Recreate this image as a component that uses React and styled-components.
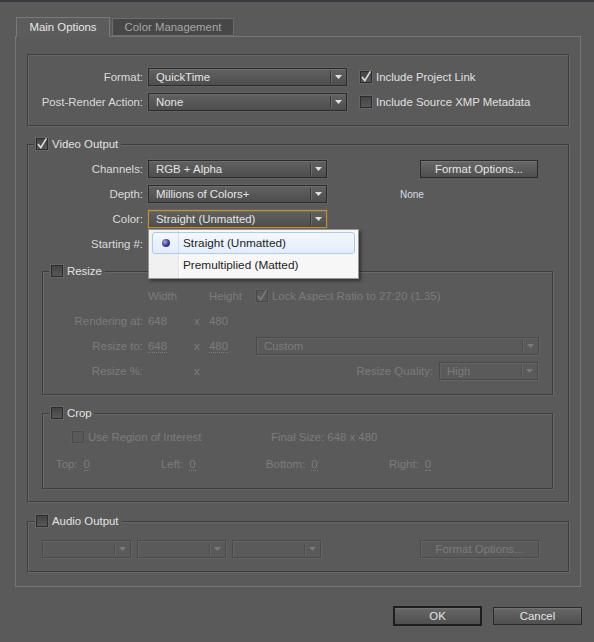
import React from 'react';
import styled, { createGlobalStyle } from 'styled-components';

const GlobalStyle = createGlobalStyle`
  html, body {
    margin: 0;
    padding: 0;
    background: #5a5a5a;
  }
  * {
    box-sizing: border-box;
  }
`;

const Window = styled.div`
  width: 594px;
  height: 642px;
  overflow: hidden;
  background: #5a5a5a;
  border-top: 2px solid #363a40;
  font-family: "Liberation Sans", Arial, sans-serif;
  font-size: 11.4px;
  color: #dadada;
`;

const TabBar = styled.div`
  display: flex;
  align-items: flex-end;
  height: 34px;
  padding-left: 16px;
`;

const Tab = styled.div`
  position: relative;
  z-index: ${p => (p.$active ? 1 : 0)};
  width: ${p => p.$w}px;
  height: ${p => (p.$active ? 20 : 18)}px;
  margin-bottom: ${p => (p.$active ? -1 : 0)}px;
  margin-left: ${p => (p.$active ? 0 : 2)}px;
  display: flex;
  align-items: center;
  justify-content: center;
  padding-bottom: ${p => (p.$active ? 2 : 0)}px;
  border: 1px solid ${p => (p.$active ? '#7a7a7a' : '#6c6c6c')};
  border-bottom: ${p => (p.$active ? 'none' : '1px solid #6c6c6c')};
  background: ${p => (p.$active ? '#5c5c5c' : '#474747')};
  color: ${p => (p.$active ? '#e8e8e8' : '#a6a6a6')};
`;

const Panel = styled.div`
  margin-left: 15px;
  width: 566px;
  border: 1px solid #767676;
  padding: 17px 11px 14px;
`;

const GroupBox = styled.div`
  border: 1px solid #3e3e3e;
  box-shadow: inset 1px 1px 0 #686868, 1px 1px 0 #686868;
`;

const TopGroup = styled(GroupBox)`
  padding: 13px 0 14px;
`;

const VideoGroup = styled(GroupBox)`
  margin-top: 18px;
  padding-bottom: 12px;
`;

const SubGroup = styled(GroupBox)`
  margin: 18px 15px 0 14px;
  padding-bottom: ${p => p.$pb}px;
`;

const AudioGroup = styled(GroupBox)`
  margin-top: 19px;
  padding-bottom: 13px;
`;

const Legend = styled.div`
  width: fit-content;
  height: 14px;
  margin: -8px 0 0 6px;
  padding: 0 3px 0 2px;
  display: flex;
  align-items: center;
  gap: 4px;
  background: #5a5a5a;
  color: #e2e2e2;
`;

const FormGrid = styled.div`
  display: grid;
  grid-template-columns: ${p => p.$cols};
  grid-auto-rows: 18px;
  row-gap: 7px;
  align-items: center;
  margin-top: ${p => p.$mt || 0}px;
  color: ${p => (p.$disabled ? '#7c7c7c' : '#dadada')};
`;

const FieldLabel = styled.span`
  text-align: right;
  padding-right: 5px;
  white-space: nowrap;
`;

const CheckRow = styled.label`
  display: flex;
  align-items: center;
  gap: 4px;
  white-space: nowrap;
  color: ${p => (p.$disabled ? '#7c7c7c' : '#e0e0e0')};
`;

const Box = styled.span`
  flex: none;
  width: 12px;
  height: 12px;
  display: inline-flex;
  align-items: center;
  justify-content: center;
  border: 1px solid ${p => (p.$disabled ? '#4a4a4a' : '#2c2c2c')};
  background: ${p => (p.$disabled ? '#595959' : 'linear-gradient(#444, #575757)')};
  box-shadow: 0 0 0 1px ${p => (p.$disabled ? '#5f5f5f' : '#666')};
  svg {
    overflow: visible;
  }
`;

const Check = ({ checked, disabled }) => (
  <Box $disabled={disabled}>
    {checked && (
      <svg width="10" height="10" viewBox="0 0 10 10">
        <path
          d="M1 5 L3.8 8.6 L9.4 -0.6"
          fill="none"
          stroke={disabled ? '#7c7c7c' : '#dcdcdc'}
          strokeWidth="1.6"
        />
      </svg>
    )}
  </Box>
);

const SelectBox = styled.div`
  position: relative;
  flex: none;
  width: ${p => p.$w}px;
  height: 18px;
  display: flex;
  align-items: center;
  padding-left: 7px;
  border: 1px solid ${p => (p.$focus ? '#c8921c' : p.$disabled ? '#4a4a4a' : '#2b2b2b')};
  background: ${p => (p.$disabled ? '#5a5a5a' : 'linear-gradient(#616161, #4e4e4e)')};
  box-shadow: ${p => (p.$disabled ? 'inset 1px 1px 0 #646464, 1px 1px 0 #646464' : 'inset 0 1px 0 #6c6c6c, 0 0 0 1px #626262')};
  color: ${p => (p.$disabled ? '#7c7c7c' : '#e6e6e6')};
`;

const SelectText = styled.span`
  flex: 1;
  overflow: hidden;
  white-space: nowrap;
`;

const ArrowCell = styled.span`
  flex: none;
  width: 16px;
  height: 12px;
  display: flex;
  align-items: center;
  justify-content: center;
  border-left: 1px solid ${p => (p.$disabled ? '#4c4c4c' : '#383838')};
  box-shadow: inset 1px 0 0 ${p => (p.$disabled ? '#676767' : '#6c6c6c')};
`;

const Select = ({ w, value, disabled, focus, children }) => (
  <SelectBox $w={w} $disabled={disabled} $focus={focus}>
    <SelectText>{value}</SelectText>
    <ArrowCell $disabled={disabled}>
      <svg width="7" height="4" viewBox="0 0 7 4">
        <polygon points="0,0 7,0 3.5,4" fill={disabled ? '#7a7a7a' : '#e2e2e2'} />
      </svg>
    </ArrowCell>
    {children}
  </SelectBox>
);

const Menu = styled.div`
  position: absolute;
  z-index: 5;
  top: 18px;
  left: -1px;
  width: 211px;
  height: 50px;
  padding: 2px 3px;
  border: 1px solid #979797;
  background: linear-gradient(90deg, #f1f1f1 0, #f1f1f1 29px, #e2e3e3 29px, #e2e3e3 30px, #ffffff 30px, #ffffff 31px, #f7f7f7 31px);
  box-shadow: 2px 2px 3px rgba(0, 0, 0, 0.45);
  font-size: 11.8px;
  color: #1c1c1c;
`;

const MenuItem = styled.div`
  height: 22px;
  display: flex;
  align-items: center;
  border: 1px solid ${p => (p.$hot ? '#a9cbf2' : 'transparent')};
  border-radius: 3px;
  background: ${p => (p.$hot ? 'linear-gradient(#f4f8fe, #e3edfb)' : 'transparent')};
`;

const MenuIcon = styled.span`
  flex: none;
  width: 26px;
  height: 100%;
  display: flex;
  align-items: center;
  justify-content: center;
  border-right: 1px solid ${p => (p.$hot ? '#cfe0f6' : 'transparent')};
`;

const Bullet = styled.span`
  width: 8px;
  height: 8px;
  border-radius: 50%;
  background: radial-gradient(circle at 35% 35%, #a6a6e6, #3a3a92 55%, #22226a);
`;

const MenuText = styled.span`
  padding-left: 4px;
  white-space: nowrap;
`;

const Button = styled.div`
  flex: none;
  width: ${p => p.$w}px;
  height: ${p => (p.$default ? 20 : 18)}px;
  margin-left: ${p => p.$ml || 0}px;
  display: flex;
  align-items: center;
  justify-content: center;
  border: ${p => (p.$default ? '2px solid #1f1f1f' : p.$disabled ? '1px solid #4a4a4a' : '1px solid #2b2b2b')};
  background: ${p => (p.$disabled ? '#5a5a5a' : 'linear-gradient(#686868, #4f4f4f)')};
  box-shadow: ${p => (p.$disabled ? 'inset 1px 1px 0 #646464, 1px 1px 0 #646464' : 'inset 0 1px 0 #747474')};
  color: ${p => (p.$disabled ? '#7c7c7c' : '#e6e6e6')};
  white-space: nowrap;
`;

const RightCell = styled.div`
  display: flex;
  align-items: center;
`;

const NoneNote = styled.span`
  font-size: 10px;
  color: #d4dde8;
`;

const Value = styled.span`
  width: fit-content;
  line-height: 12px;
  border-bottom: ${p => (p.$dotted ? '1px dotted #7c7c7c' : 'none')};
`;

const QualityCell = styled.div`
  display: flex;
  align-items: center;
  justify-content: flex-end;
  gap: 6px;
`;

const CropRow = styled.div`
  display: flex;
  align-items: center;
  height: 18px;
  margin-top: ${p => p.$mt}px;
  padding-left: ${p => p.$pl}px;
  color: #7c7c7c;
`;

const CropCell = styled.div`
  flex: none;
  width: ${p => (p.$w ? `${p.$w}px` : 'auto')};
  display: flex;
  align-items: center;
  gap: 6px;
`;

const AudioRow = styled.div`
  display: flex;
  align-items: center;
  gap: 6px;
  margin-top: 12px;
  padding-left: 14px;
`;

const ButtonRow = styled.div`
  display: flex;
  align-items: center;
  justify-content: flex-end;
  gap: 11px;
  margin-top: 19px;
  padding-right: 12px;
`;

export default function App() {
  return (
    <Window>
      <GlobalStyle />
      <TabBar>
        <Tab $active $w={94}>Main Options</Tab>
        <Tab $w={122}>Color Management</Tab>
      </TabBar>

      <Panel>
        <TopGroup>
          <FormGrid $cols="120px 199px 13px auto">
            <FieldLabel>Format:</FieldLabel>
            <Select w={199} value="QuickTime" />
            <span />
            <CheckRow>
              <Check checked />
              Include Project Link
            </CheckRow>

            <FieldLabel>Post-Render Action:</FieldLabel>
            <Select w={199} value="None" />
            <span />
            <CheckRow>
              <Check />
              Include Source XMP Metadata
            </CheckRow>
          </FormGrid>
        </TopGroup>

        <VideoGroup>
          <Legend>
            <Check checked />
            Video Output
          </Legend>
          <FormGrid $cols="120px 179px 73px 138px" $mt={9}>
            <FieldLabel>Channels:</FieldLabel>
            <Select w={179} value="RGB + Alpha" />
            <span />
            <RightCell>
              <Button $w={118} $ml={20}>Format Options...</Button>
            </RightCell>

            <FieldLabel>Depth:</FieldLabel>
            <Select w={179} value="Millions of Colors+" />
            <span />
            <RightCell>
              <NoneNote>None</NoneNote>
            </RightCell>

            <FieldLabel>Color:</FieldLabel>
            <Select w={179} value="Straight (Unmatted)" focus>
              <Menu>
                <MenuItem $hot>
                  <MenuIcon $hot>
                    <Bullet />
                  </MenuIcon>
                  <MenuText>Straight (Unmatted)</MenuText>
                </MenuItem>
                <MenuItem>
                  <MenuIcon />
                  <MenuText>Premultiplied (Matted)</MenuText>
                </MenuItem>
              </Menu>
            </Select>
            <span />
            <span />

            <FieldLabel>Starting #:</FieldLabel>
            <span />
            <span />
            <span />
          </FormGrid>

          <SubGroup $pb={14}>
            <Legend>
              <Check />
              Resize
            </Legend>
            <FormGrid $cols="105px 46px 15px 47px 282px" $mt={9} $disabled>
              <span />
              <span>Width</span>
              <span />
              <span>Height</span>
              <CheckRow $disabled>
                <Check checked disabled />
                Lock Aspect Ratio to 27:20 (1.35)
              </CheckRow>

              <FieldLabel>Rendering at:</FieldLabel>
              <Value>648</Value>
              <span>x</span>
              <Value>480</Value>
              <span />

              <FieldLabel>Resize to:</FieldLabel>
              <Value $dotted>648</Value>
              <span>x</span>
              <Value $dotted>480</Value>
              <Select w={283} value="Custom" disabled />

              <FieldLabel>Resize %:</FieldLabel>
              <span />
              <span>x</span>
              <span />
              <QualityCell>
                Resize Quality:
                <Select w={99} value="High" disabled />
              </QualityCell>
            </FormGrid>
          </SubGroup>

          <SubGroup $pb={15}>
            <Legend>
              <Check />
              Crop
            </Legend>
            <CropRow $mt={8} $pl={29}>
              <CropCell $w={199}>
                <CheckRow $disabled>
                  <Check disabled />
                  Use Region of Interest
                </CheckRow>
              </CropCell>
              <CropCell>Final Size: 648 x 480</CropCell>
            </CropRow>
            <CropRow $mt={9} $pl={13}>
              <CropCell $w={105}>
                Top: <Value $dotted>0</Value>
              </CropCell>
              <CropCell $w={105}>
                Left: <Value $dotted>0</Value>
              </CropCell>
              <CropCell $w={123}>
                Bottom: <Value $dotted>0</Value>
              </CropCell>
              <CropCell>
                Right: <Value $dotted>0</Value>
              </CropCell>
            </CropRow>
          </SubGroup>
        </VideoGroup>

        <AudioGroup>
          <Legend>
            <Check />
            Audio Output
          </Legend>
          <AudioRow>
            <Select w={89} value="" disabled />
            <Select w={89} value="" disabled />
            <Select w={89} value="" disabled />
            <Button $w={119} $ml={93} $disabled>Format Options...</Button>
          </AudioRow>
        </AudioGroup>
      </Panel>

      <ButtonRow>
        <Button $w={89} $default>OK</Button>
        <Button $w={89}>Cancel</Button>
      </ButtonRow>
    </Window>
  );
}
